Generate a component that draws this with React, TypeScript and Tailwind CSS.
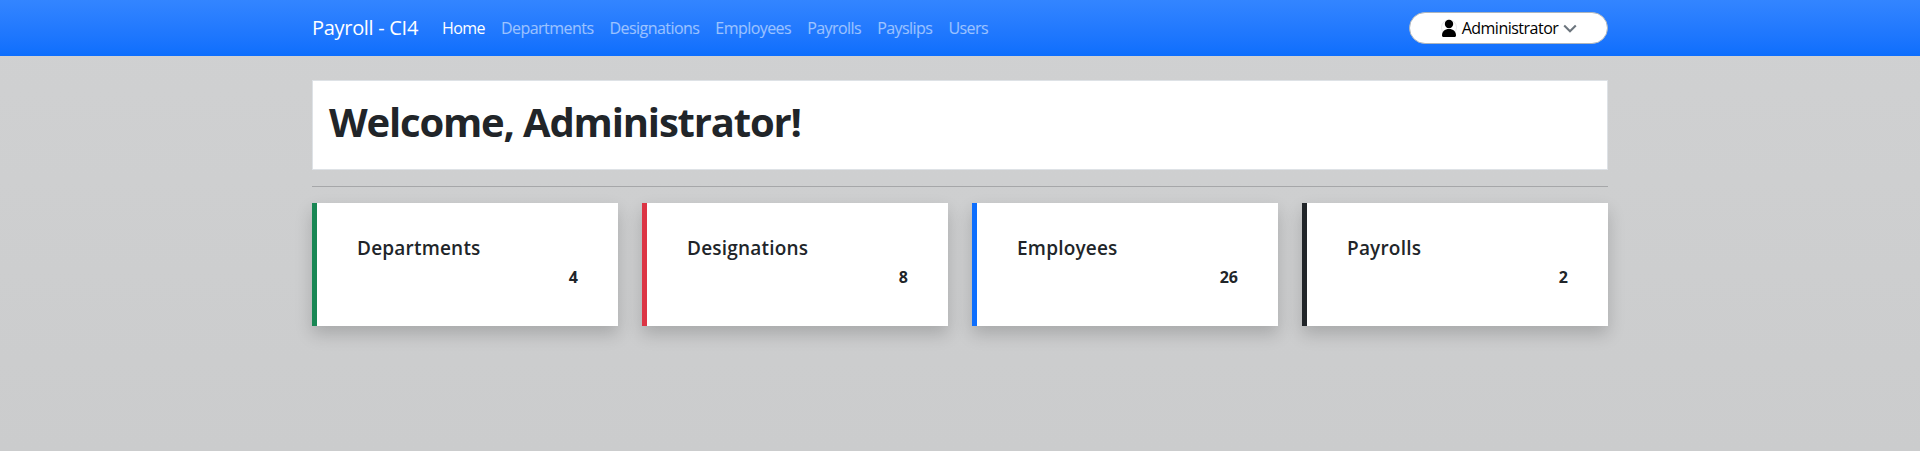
const navLinks = ["Home", "Departments", "Designations", "Employees", "Payrolls", "Payslips", "Users"];

const cards = [
  { title: "Departments", count: 4, border: "border-[#198754]" },
  { title: "Designations", count: 8, border: "border-[#dc3545]" },
  { title: "Employees", count: 26, border: "border-[#0d6efd]" },
  { title: "Payrolls", count: 2, border: "border-[#212529]" },
];

function UserIcon() {
  return (
    <svg width="16" height="20" viewBox="0 0 16 20" className="shrink-0">
      <circle cx="8" cy="9.5" r="7.5" fill="none" stroke="#dfe1e3" strokeWidth="0.8" />
      <circle cx="8" cy="6" r="4.2" fill="#000" />
      <path d="M1 17.5c0-4 2.6-6.5 7-6.5s7 2.500 7 6.500c0 .8-.6 1.500-1.500 1.500h-11C1.600 19 1 18.300 1 17.500z" fill="#000" />
    </svg>
  );
}

function ChevronIcon() {
  return (
    <svg width="14" height="9" viewBox="0 0 14 9" className="shrink-0">
      <path d="M1.200 1.500 7 7.200l5.800-5.700" fill="none" stroke="#6c757d" strokeWidth="2.100" />
    </svg>
  );
}

export default function App() {
  return (
    <div className="min-h-screen bg-linear-to-b from-[#d0d1d2] to-[#cbcccd] font-['Open_Sans','Noto_Sans',sans-serif] text-[#212529]">
      {/* Navbar */}
      <nav className="h-14 bg-linear-to-b from-[#3385ff] to-[#0d6efd]">
        <div className="mx-auto flex h-full w-[1320px] items-center px-3">
          <a className="mr-4 text-[20px] tracking-[-0.3px] text-white">Payroll - CI4</a>
          <ul className="flex">
            {navLinks.map((link, idx) => (
              <li key={link}>
                <a className={`block px-2 text-[16px] tracking-[-0.55px] ${idx === 0 ? "text-white" : "text-white/55"}`}>
                  {link}
                </a>
              </li>
            ))}
          </ul>
          <button className="ml-auto flex h-8 w-[199px] items-center justify-center gap-[5px] rounded-full border border-[#adb5bd] bg-white pl-px text-[16px] tracking-[-0.5px] text-black">
            <UserIcon />
            <span>Administrator</span>
            <ChevronIcon />
          </button>
        </div>
      </nav>

      {/* Content */}
      <main className="mx-auto w-[1320px] px-3 pt-6">
        <div className="border border-[#dee2e6] bg-white p-4">
          <h1 className="mb-2 pt-px text-[40px] leading-[47px] font-bold tracking-[-1.17px]">Welcome, Administrator!</h1>
        </div>
        <hr className="my-4 border-[#a6a7a9]" />
        <div className="grid grid-cols-4 gap-6">
          {cards.map((card) => (
            <div
              key={card.title}
              className={`h-[123px] border-l-[5px] ${card.border} bg-white pt-[33px] pr-10 pl-10 shadow-[0_8px_16px_rgba(0,0,0,0.18)]`}
            >
              <h5 className="text-[19px] leading-6 font-semibold tracking-[0.2px]">{card.title}</h5>
              <div className="mt-[5px] text-right text-[16px] leading-6 font-bold">{card.count}</div>
            </div>
          ))}
        </div>
      </main>
    </div>
  );
}
